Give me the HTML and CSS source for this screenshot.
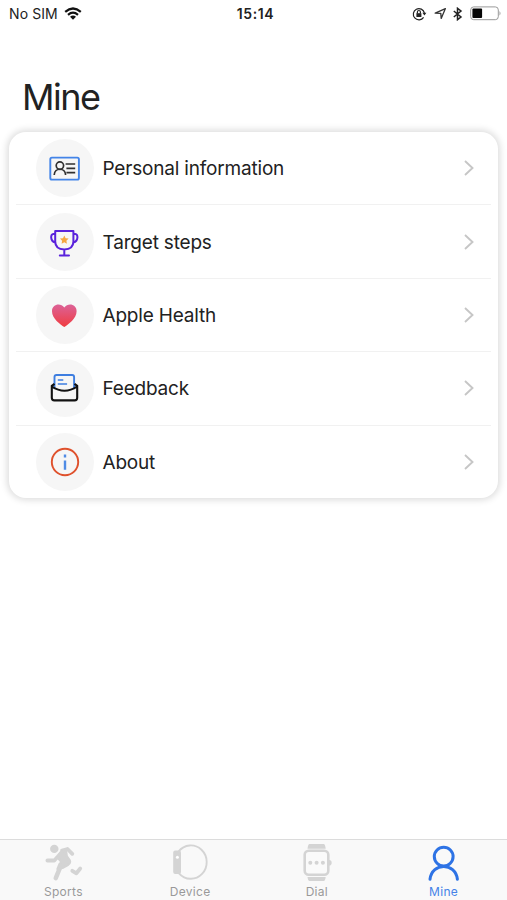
FILE: index.html
```html
<!DOCTYPE html>
<html lang="en">
<head>
<meta charset="utf-8">
<title>Mine</title>
<link rel="stylesheet" href="styles.css">
</head>
<body>
<div class="app">
  <header class="status">
    <div class="carrier"><span>No SIM</span>
      <svg width="18" height="13" viewBox="0 0 18 13" fill="none" stroke="#111" stroke-width="2.2"><path d="M1.2 4.8Q9-1.8 16.8 4.8M4 7.8Q9 3.6 14 7.8"/><path d="M6 9.7Q9 7.3 12 9.7L9 12.7Z" fill="#111" stroke="none"/></svg>
    </div>
    <time class="time">15:14</time>
    <div class="indicators">
      <svg width="15" height="14" viewBox="0 0 15 14" fill="none" stroke="#222" stroke-width="1.2"><path d="M11.6 10.3A5.6 5.6 0 1 1 12.4 6"/><path d="M10.4 5.8h4l-2 2.7z" fill="#222" stroke="none"/><rect x="4.4" y="6.2" width="5" height="3.8" fill="#222" stroke="none"/><path d="M5.4 6.5V5a1.5 1.5 0 0 1 3 0v1.5"/></svg>
      <svg width="13" height="13" viewBox="0 0 13 13" fill="none" stroke="#333" stroke-width="1.3" stroke-linejoin="round"><path d="M1.2 6.2 11.4 1.6 7.2 11.4 6.8 6.4Z"/></svg>
      <svg width="10" height="14" viewBox="0 0 10 14" fill="none" stroke="#222" stroke-width="1.5"><path d="M.8 4 8 10 4.5 12.7V1.3L8 4 .8 10"/></svg>
      <svg width="32" height="15" viewBox="0 0 32 15"><rect x=".7" y=".9" width="27.6" height="12.8" rx="3" fill="#fff" stroke="#999" stroke-width="1"/><rect x="2.4" y="2.6" width="9.7" height="9.4" rx="1" fill="#050505"/><path d="M29.5 5q2 2.3 0 4.6z" fill="#999"/></svg>
    </div>
  </header>
  <h1 class="title">Mine</h1>
  <main class="card">
    <a class="row">
      <span class="badge"><svg width="58" height="58" viewBox="0 0 58 58" fill="none"><rect x="14.3" y="18.6" width="28.6" height="22" rx="1.6" stroke="#4384e8" stroke-width="1.9"/><g stroke="#303030" stroke-width="1.7"><circle cx="23.9" cy="26.6" r="3.7"/><path d="M18.2 36C18.5 28.3 29.3 28.3 29.6 36M29.6 25h9.6M30.4 29.4h8.8M30.4 33.7h8.8"/></g></svg></span>
      <span class="label">Personal information</span><svg class="chevron" width="10" height="16" viewBox="0 0 10 16"><path d="M1 1 8.5 8 1 15"/></svg>
    </a>
    <a class="row">
      <span class="badge"><svg width="58" height="58" viewBox="0 0 58 58" fill="none"><g stroke="#5a22dc" stroke-width="2" stroke-linejoin="round" stroke-linecap="round"><path d="M19.2 18h18.2v10.6q0 7.8-9.1 7.8t-9.1-7.8zM28.3 36.4v6M23.8 42.5h9.2M19 21h-1.8c-2.6 0-3.4 6.6 2 8.6M37.6 21h1.8c2.6 0 3.4 6.6-2 8.6"/></g><path d="m28.3 22.5 1.3 2.7 3 .4-2.2 2.1.5 3-2.6-1.4-2.7 1.4.5-3-2.1-2.1 3-.4z" fill="#f4a742"/></svg></span>
      <span class="label">Target steps</span><svg class="chevron" width="10" height="16" viewBox="0 0 10 16"><path d="M1 1 8.5 8 1 15"/></svg>
    </a>
    <a class="row">
      <span class="badge"><svg width="58" height="58" viewBox="0 0 58 58"><defs><linearGradient id="heart" x2="0" y2="1"><stop stop-color="#dc6297"/><stop offset="1" stop-color="#f03c40"/></linearGradient></defs><path d="M28.3 21.6C24.7 16.4 16 18 16 25.2c0 7.3 8.3 13.2 12.3 15.8 4-2.6 12.3-8.5 12.3-15.8 0-7.2-8.7-8.8-12.3-3.6z" fill="url(#heart)"/></svg></span>
      <span class="label">Apple Health</span><svg class="chevron" width="10" height="16" viewBox="0 0 10 16"><path d="M1 1 8.5 8 1 15"/></svg>
    </a>
    <a class="row">
      <span class="badge"><svg width="58" height="58" viewBox="0 0 58 58" fill="none" stroke-linejoin="round"><path d="M18.5 30V18q0-2 2-2h15.6q2 0 2 2V30" stroke="#3e7ee0" stroke-width="1.9"/><path d="M21.8 21h5.5M21.8 25h9.3" stroke="#3e7ee0" stroke-width="1.7"/><path d="M18.5 24.8l-2.7 2v12q0 2.6 2.6 2.6h20.2q2.6 0 2.6-2.6v-12l-2.7-2M15.8 27.5Q28.5 36 41.2 27.5" stroke="#111" stroke-width="2.1"/></svg></span>
      <span class="label">Feedback</span><svg class="chevron" width="10" height="16" viewBox="0 0 10 16"><path d="M1 1 8.5 8 1 15"/></svg>
    </a>
    <a class="row">
      <span class="badge"><svg width="58" height="58" viewBox="0 0 58 58" fill="none"><circle cx="29" cy="29" r="13.2" stroke="#df512c" stroke-width="1.9"/><path d="M29 21.6v2.8M29 27.5v9.3" stroke="#4f8be5" stroke-width="2.4"/></svg></span>
      <span class="label">About</span><svg class="chevron" width="10" height="16" viewBox="0 0 10 16"><path d="M1 1 8.5 8 1 15"/></svg>
    </a>
  </main>
  <nav class="tabs">
    <a class="tab"><svg width="40" height="40" viewBox="0 0 40 40" fill="none" stroke="#d4d4d4" stroke-linejoin="round" stroke-linecap="round"><circle cx="11.3" cy="7.9" r="4.2" fill="#d4d4d4" stroke="none"/><path d="M4.4 19.5 11.3 19.5 18.5 11.5M19 9.5l5.5-1.5 4.8 4.8" stroke-width="3.8"/><path d="m17.5 11.5 5.5-2 .8 5.7 3 4.3q1 2.5-1.5 4.2l-5.8 3.3-5 1 2-5 2-2-3.8-4.3z" fill="#d4d4d4" stroke-width="2.2"/><path d="M17.5 25.5 12.8 37" stroke-width="4.6"/><path d="m29.3 29.8 4.1 2.5 3.8-4.8" stroke-width="3.8"/></svg><span>Sports</span></a>
    <a class="tab"><svg width="40" height="40" viewBox="0 0 40 40" fill="none" stroke="#d4d4d4"><path d="M8.5 10.5A15.9 16.7 0 1 1 9 32.3" stroke-width="1.9"/><rect x="3.2" y="9.6" width="7.8" height="23.4" rx="2" fill="#d4d4d4" stroke="none"/><circle cx="7.4" cy="16.2" r="1.5" fill="#fff" stroke="none"/></svg><span>Device</span></a>
    <a class="tab"><svg width="40" height="40" viewBox="0 0 40 40" fill="#d4d4d4"><path d="M12.5 3h14.2q1.5 0 2 4.7H10.5q.5-4.7 2-4.7zM10.5 36h18.2q-.5 4-2 4H12.5q-1.5 0-2-4z"/><rect x="7.7" y="9.8" width="23.6" height="24" rx="4" fill="#fafafa" stroke="#d4d4d4" stroke-width="2.6"/><path d="M32 19q2.7 0 2.7 2.8T32 24.6z"/><circle cx="13.3" cy="21.8" r="2"/><circle cx="19.6" cy="21.8" r="2"/><circle cx="25.9" cy="21.8" r="2"/></svg><span>Dial</span></a>
    <a class="tab active"><svg width="40" height="40" viewBox="0 0 40 40" fill="none" stroke="#2e73e5" stroke-width="3" stroke-linecap="round"><circle cx="19.7" cy="15.6" r="9.4"/><path d="M6 38.2C8 21.2 31.4 21.2 33.4 38.2"/></svg><span>Mine</span></a>
  </nav>
</div>
</body>
</html>
```
FILE: styles.css
```css
* { box-sizing: border-box; }
body { margin: 0; background: #fff; font-family: Inter, "Liberation Sans", sans-serif; color: #222; }
.app { height: 900px; display: flex; flex-direction: column; overflow: hidden; }
.status { height: 28px; display: grid; grid-template-columns: 1fr auto 1fr; align-items: center; padding: 0 5px 0 9px; font-size: 14px; }
.carrier, .indicators { display: flex; align-items: center; }
.carrier { gap: 6px; margin-top: -1px; letter-spacing: .1px; }
.time { font-weight: 600; font-size: 14px; letter-spacing: .6px; margin-top: -1px; }
.indicators { justify-content: flex-end; gap: 7px; margin-top: -1px; }
.indicators svg:nth-child(3) { margin-left: -1px; }
.title { margin: 48px 0 0 22px; height: 42px; line-height: 42px; font-size: 36px; font-weight: 400; letter-spacing: -1.5px; }
.card { margin: 14px 9px 0; height: 366px; border-radius: 17px; box-shadow: 0 0 7px 2px rgba(0,0,0,.14); display: flex; flex-direction: column; padding: 0 7px; }
.row { flex: 1; display: flex; align-items: center; padding: 0 17px 0 19.5px; border-bottom: 1px solid #f1f1f1; }
.row:last-child { border-bottom: 0; }
.badge { width: 58px; height: 58px; border-radius: 50%; background: #f6f6f6; }
.badge svg { display: block; }
.label { flex: 1; margin-left: 9px; padding-top: 1px; font-size: 19px; letter-spacing: -.19px; }
.chevron { fill: none; stroke: #c6c6c6; stroke-width: 1.9; }
.tabs { margin-top: auto; height: 61px; background: #f9f9f9; border-top: 1px solid #dcdcdc; display: grid; grid-template-columns: repeat(4, 1fr); }
.tab { display: flex; flex-direction: column; align-items: center; font-size: 12px; line-height: 14px; letter-spacing: .3px; color: #999; }
.tab svg { height: 40px; margin-top: 1px; flex: none; }
.tab span { margin-top: 4px; }
.tab.active { color: #4583e8; }
```
